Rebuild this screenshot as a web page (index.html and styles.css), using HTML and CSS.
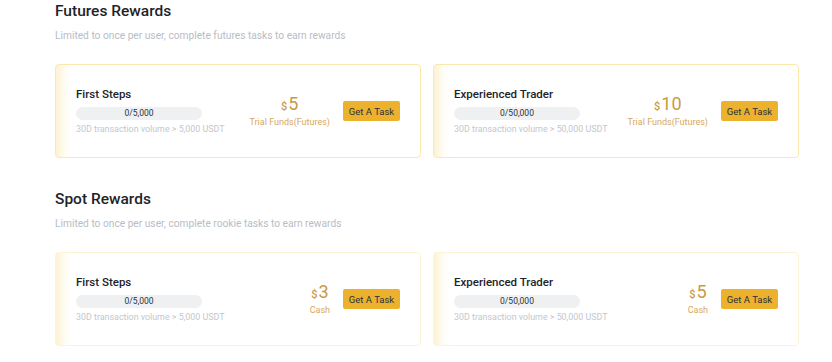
FILE: index.html
```html
<!DOCTYPE html>
<html lang="en">

<head>
    <meta charset="UTF-8">
    <meta name="viewport" content="width=device-width, initial-scale=1.0">
    <title>Rewards</title>
    <link rel="stylesheet" href="styles.css">
</head>

<body>
    <div class="rewards">
        <section class="section">
            <h2 class="sectionTitle">Futures Rewards</h2>
            <p class="sectionNote">Limited to once per user, complete futures tasks to earn rewards</p>
            <div class="cards">
                <div class="card">
                    <div class="task">
                        <div class="taskName">First Steps</div>
                        <div class="bar">0/5,000</div>
                        <div class="taskRule">30D transaction volume &gt; 5,000 USDT</div>
                    </div>
                    <div class="prize">
                        <div class="amount"><span class="cur">$</span>5</div>
                        <div class="prizeType">Trial Funds(Futures)</div>
                    </div>
                    <button class="taskBtn">Get A Task</button>
                </div>
                <div class="card">
                    <div class="task">
                        <div class="taskName">Experienced Trader</div>
                        <div class="bar">0/50,000</div>
                        <div class="taskRule">30D transaction volume &gt; 50,000 USDT</div>
                    </div>
                    <div class="prize">
                        <div class="amount"><span class="cur">$</span>10</div>
                        <div class="prizeType">Trial Funds(Futures)</div>
                    </div>
                    <button class="taskBtn">Get A Task</button>
                </div>
            </div>
        </section>

        <section class="section">
            <h2 class="sectionTitle">Spot Rewards</h2>
            <p class="sectionNote">Limited to once per user, complete rookie tasks to earn rewards</p>
            <div class="cards">
                <div class="card light">
                    <div class="task">
                        <div class="taskName">First Steps</div>
                        <div class="bar">0/5,000</div>
                        <div class="taskRule">30D transaction volume &gt; 5,000 USDT</div>
                    </div>
                    <div class="prize">
                        <div class="amount"><span class="cur">$</span>3</div>
                        <div class="prizeType">Cash</div>
                    </div>
                    <button class="taskBtn">Get A Task</button>
                </div>
                <div class="card light">
                    <div class="task">
                        <div class="taskName">Experienced Trader</div>
                        <div class="bar">0/50,000</div>
                        <div class="taskRule">30D transaction volume &gt; 50,000 USDT</div>
                    </div>
                    <div class="prize">
                        <div class="amount"><span class="cur">$</span>5</div>
                        <div class="prizeType">Cash</div>
                    </div>
                    <button class="taskBtn">Get A Task</button>
                </div>
            </div>
        </section>
    </div>
</body>

</html>
```

FILE: styles.css
```css
body, html {
    margin: 0;
    background: #fff;
    font-family: Roboto, "Liberation Sans", sans-serif;
    color: #1e2329;
}

.rewards {
    width: 744px;
    padding-left: 55px;
}

.section {
    margin-bottom: 30px;
}

.sectionTitle {
    margin: 0;
    font-size: 15.5px;
    line-height: 22px;
    font-weight: 500;
    color: #1e2329;
}

.sectionNote {
    margin: 6px 0 20px;
    font-size: 10.2px;
    line-height: 16px;
    color: #b7bdc6;
}

.cards {
    display: grid;
    grid-template-columns: 1fr 1fr;
    gap: 12px;
}

.card {
    height: 94px;
    box-sizing: border-box;
    padding: 0 20px;
    display: flex;
    align-items: center;
    border: 1px solid #fbe8aa;
    border-radius: 4px;
    background: linear-gradient(90deg, #fdf2d2 0, #fffdf7 10px, #fff 16px);
}

.card.light {
    border-color: #fdf3d6;
}

.task {
    flex: 1;
}

.taskName {
    font-size: 11.5px;
    line-height: 16px;
    font-weight: 500;
    color: #1e2329;
}

.bar {
    width: 126px;
    height: 13px;
    margin-top: 5px;
    border-radius: 7px;
    background: #eff0f2;
    font-size: 8.5px;
    line-height: 13px;
    text-align: center;
    color: #2b3139;
}

.taskRule {
    margin-top: 3px;
    font-size: 8.9px;
    line-height: 13px;
    color: #c3c7ce;
}

.prize {
    text-align: center;
    margin-right: 13px;
    color: #c99a45;
}

.amount {
    font-size: 18px;
    line-height: 18px;
}

.cur {
    font-size: 11px;
    font-weight: 500;
    margin-right: 1px;
}

.prizeType {
    font-size: 9px;
    line-height: 12px;
    color: #d6a860;
}

.taskBtn {
    width: 57px;
    height: 20px;
    padding: 0;
    border: none;
    border-radius: 2px;
    background: #ecb22e;
    font-family: inherit;
    font-size: 9.5px;
    color: #2b3139;
    cursor: pointer;
}
```
